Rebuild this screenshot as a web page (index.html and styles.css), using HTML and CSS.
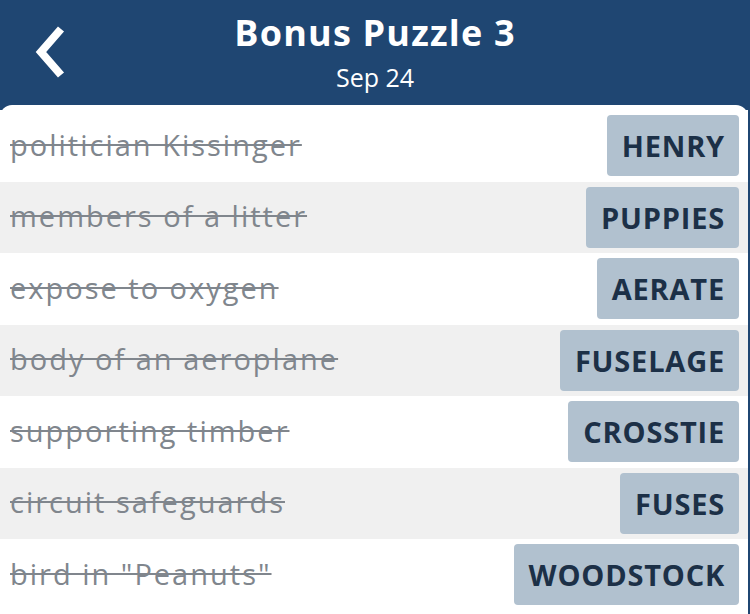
FILE: index.html
```html
<!DOCTYPE html>
<html lang="en">
<head>
    <meta charset="UTF-8">
    <meta name="viewport" content="width=device-width, initial-scale=1.0">
    <title>Bonus Puzzle 3</title>
    <link rel="stylesheet" href="styles.css">
</head>
<body>

<div class="header">
    <a class="back" href="#">
        <svg width="40" height="56" viewBox="0 0 40 56">
            <polyline points="31,4 11,27 31,50" fill="none" stroke="#fff" stroke-width="8" stroke-linecap="butt" stroke-linejoin="miter"/>
        </svg>
    </a>
    <div class="title">
        <h1>Bonus Puzzle 3</h1>
        <p>Sep 24</p>
    </div>
</div>

<div class="card">
    <div class="row">
        <span class="clue">politician Kissinger</span>
        <span class="answer">HENRY</span>
    </div>
    <div class="row">
        <span class="clue">members of a litter</span>
        <span class="answer">PUPPIES</span>
    </div>
    <div class="row">
        <span class="clue">expose to oxygen</span>
        <span class="answer">AERATE</span>
    </div>
    <div class="row">
        <span class="clue">body of an aeroplane</span>
        <span class="answer">FUSELAGE</span>
    </div>
    <div class="row">
        <span class="clue">supporting timber</span>
        <span class="answer">CROSSTIE</span>
    </div>
    <div class="row">
        <span class="clue">circuit safeguards</span>
        <span class="answer">FUSES</span>
    </div>
    <div class="row">
        <span class="clue">bird in "Peanuts"</span>
        <span class="answer">WOODSTOCK</span>
    </div>
</div>

</body>
</html>
```

FILE: styles.css
```css
body {
    font-family: "Open Sans", Lato, sans-serif;
    background-color: #1f4672;
    margin: 0;
    padding: 0;
}
.header {
    height: 105px;
    position: relative;
    display: flex;
    justify-content: center;
    color: white;
}
.back {
    position: absolute;
    left: 30px;
    top: 25px;
}
.back svg {
    display: block;
}
.title {
    text-align: center;
}
.title h1 {
    margin: 11px 0 0;
    font-size: 36px;
    font-weight: bold;
    line-height: 44px;
    letter-spacing: 1.2px;
}
.title p {
    margin: 7px 0 0;
    font-size: 25px;
    line-height: 30px;
}
.card {
    width: 748px;
    background: white;
    border-radius: 12px 12px 0 0;
    padding-top: 5px;
    min-height: 509px;
}
.row {
    height: 71.5px;
    display: flex;
    align-items: center;
    justify-content: space-between;
    background: white;
}
.row:nth-child(even) {
    background: #f0f0f0;
}
.clue {
    margin: 0 0 3px 10px;
    font-size: 29px;
    letter-spacing: 2px;
    color: #80868d;
    text-decoration: line-through;
}
.answer {
    height: 61px;
    line-height: 61px;
    margin-right: 9px;
    padding: 0 14px 0 15px;
    background: #b1c1cf;
    border-radius: 4px;
    color: #1c3047;
    font-size: 29px;
    font-weight: bold;
    letter-spacing: 0.8px;
}
```
